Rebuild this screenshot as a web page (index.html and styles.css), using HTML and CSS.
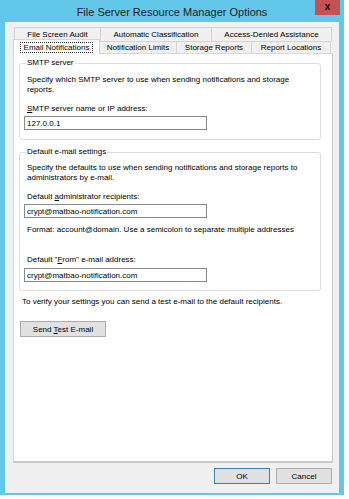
FILE: index.html
```html
<!DOCTYPE html>
<html lang="en">
<head>
  <meta charset="UTF-8">
  <title>File Server Resource Manager Options</title>
  <link rel="stylesheet" href="styles.css">
</head>
<body>
  <div class="window">
    <div class="titlebar">
      <span class="title">File Server Resource Manager Options</span>
      <span class="close">x</span>
    </div>
    <div class="client">
      <!-- tab strip -->
      <div class="tabs">
        <div class="tab-row back">
          <div class="tab w-audit">File Screen Audit</div>
          <div class="tab w-class">Automatic Classification</div>
          <div class="tab w-access">Access-Denied Assistance</div>
        </div>
        <div class="tab-row front">
          <div class="tab active w-email"><span class="focus">Email Notifications</span></div>
          <div class="tab w-limits">Notification Limits</div>
          <div class="tab w-storage">Storage Reports</div>
          <div class="tab w-locations">Report Locations</div>
        </div>
      </div>

      <div class="panel">
        <!-- SMTP server -->
        <fieldset class="group">
          <legend>SMTP server</legend>
          <p class="desc">Specify which SMTP server to use when sending notifications and storage reports.</p>
          <label class="field-label" for="smtp"><u>S</u>MTP server name or IP address:</label>
          <input class="textbox" type="text" id="smtp" value="127.0.0.1">
        </fieldset>

        <!-- Default e-mail settings -->
        <fieldset class="group second">
          <legend>Default e-mail settings</legend>
          <p class="desc">Specify the defaults to use when sending notifications and storage reports to administrators by e-mail.</p>
          <label class="field-label" for="admins">Default <u>a</u>dministrator recipients:</label>
          <input class="textbox" type="text" id="admins" value="crypt@matbao-notification.com">
          <p class="hint">Format: account@domain. Use a semicolon to separate multiple addresses</p>
          <label class="field-label from" for="from">Default "<u>F</u>rom" e-mail address:</label>
          <input class="textbox" type="text" id="from" value="crypt@matbao-notification.com">
        </fieldset>

        <p class="verify">To verify your settings you can send a test e-mail to the default recipients.</p>
        <button class="btn send" type="button">Send <u>T</u>est E-mail</button>
      </div>

      <div class="actions">
        <button class="btn default" type="button">OK</button>
        <button class="btn" type="button">Cancel</button>
      </div>
    </div>
  </div>
</body>
</html>
```

FILE: styles.css
```css
body {
  margin: 0;
  background: #fff;
  font-family: "Liberation Sans", Arial, sans-serif;
  font-size: 8px;
  color: #000;
}
.window {
  position: relative;
  width: 344px;
  height: 495px;
  background: #62c8ea;
  display: flex;
  flex-direction: column;
}
.titlebar {
  height: 22px;
  display: flex;
  align-items: center;
  justify-content: center;
}
.title {
  font-size: 11px;
  color: #1a1a1a;
  padding-top: 1px;
}
.close {
  position: absolute;
  top: 0;
  right: 4px;
  width: 25px;
  height: 15px;
  background: #c75050;
  color: #111;
  font-weight: bold;
  font-size: 10px;
  line-height: 14px;
  text-align: center;
}
.client {
  flex: 1;
  margin: 0 5px 2px;
  background: #f0f0f0;
  padding: 5px 6px 0 8px;
  display: flex;
  flex-direction: column;
}

/* tabs */
.tab-row {
  display: flex;
}
.tab-row.back {
  height: 14px;
  margin-left: 1px;
}
.tab-row.front {
  height: 12px;
  align-items: flex-end;
}
.tab {
  box-sizing: border-box;
  height: 100%;
  margin-right: -1px;
  border: 1px solid #d4d4d4;
  border-bottom: none;
  background: #f0f0f0;
  display: flex;
  align-items: center;
  justify-content: center;
  line-height: 10px;
  white-space: nowrap;
}
.tab.active {
  position: relative;
  z-index: 1;
  background: #fff;
  margin-bottom: -1px;
  height: 15px;
}
.focus {
  border: 1px dotted #333;
  padding: 0 3px;
  line-height: 9px;
}
.w-audit { width: 87px; }
.w-class { width: 112px; }
.w-access { width: 121px; }
.w-email { width: 87px; }
.w-limits { width: 78px; }
.w-storage { width: 76px; }
.w-locations { width: 80px; }

/* panel */
.panel {
  box-sizing: border-box;
  height: 410px;
  background: #fff;
  border: 1px solid #d9d9d9;
  border-right-color: #c6c6c6;
  border-bottom: 2px solid #c9c9c9;
  padding: 4px 0 0 5px;
}
.group {
  box-sizing: border-box;
  width: 302px;
  margin: 0;
  padding: 7px 6px 9px 4px;
  border: 1px solid #dcdcdc;
  border-radius: 3px;
}
.group.second {
  margin-top: 7px;
  padding-top: 6px;
  padding-bottom: 8px;
}
legend {
  margin-left: 2px;
  padding: 0 1px;
  line-height: 10px;
}
.desc,
.hint,
.verify {
  margin: 0 0 0 3px;
  line-height: 10px;
}
.field-label {
  display: block;
  margin: 9px 0 2px 3px;
  line-height: 10px;
}
.field-label.from {
  margin-top: 20px;
  margin-bottom: 3px;
}
.hint {
  margin-top: 7px;
}
.textbox {
  display: block;
  box-sizing: border-box;
  width: 183px;
  height: 14px;
  margin: 0;
  padding: 0 2px;
  border: 1px solid #8a8a8a;
  font-family: inherit;
  font-size: 8px;
  color: #000;
}
.verify {
  margin-top: 6px;
}
.btn {
  box-sizing: border-box;
  height: 16px;
  padding: 0;
  border: 1px solid #adadad;
  background: #e1e1e1;
  font-family: inherit;
  font-size: 8px;
  color: #000;
}
.btn.send {
  display: block;
  width: 86px;
  margin: 14px 0 0 1px;
}
.actions {
  display: flex;
  justify-content: flex-end;
  gap: 6px;
  margin: 5px 1px 0 0;
}
.actions .btn {
  width: 56px;
}
.btn.default {
  border-color: #3c7fb1;
}
```
